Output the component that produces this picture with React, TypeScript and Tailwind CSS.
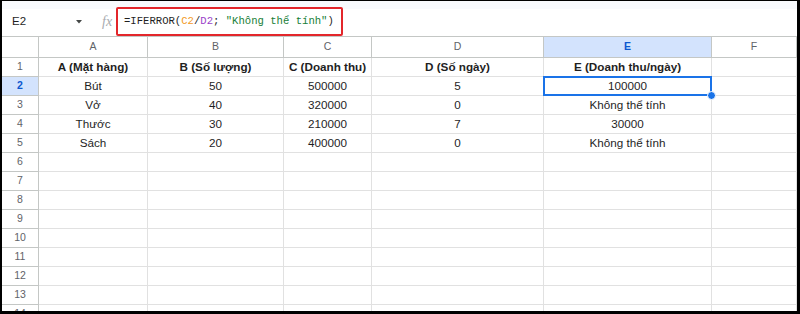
import React from "react";

const COLS = ["A", "B", "C", "D", "E", "F"];

const ROWS: string[][] = [
  ["A (Mặt hàng)", "B (Số lượng)", "C (Doanh thu)", "D (Số ngày)", "E (Doanh thu/ngày)", ""],
  ["Bút", "50", "500000", "5", "100000", ""],
  ["Vở", "40", "320000", "0", "Không thể tính", ""],
  ["Thước", "30", "210000", "7", "30000", ""],
  ["Sách", "20", "400000", "0", "Không thể tính", ""],
];

const TOTAL_ROWS = 14;

function FormulaBar() {
  return (
    <div className="flex h-[36px] items-end border-b border-[#c4c7c5] bg-[linear-gradient(#f8fafd_0_8px,white_8px)]">
      <div className="flex h-[29px] w-[100px] items-center pl-[10px] text-[11.5px] text-[#1f1f1f]">
        <span>E2</span>
        <svg className="ml-auto mr-[20px]" width="6" height="4" viewBox="0 0 6 4">
          <polygon points="0,0 6,0 3,3.5" fill="#444746" />
        </svg>
      </div>
      <div className="flex h-[29px] w-[14px] items-center font-['Liberation_Serif',serif] text-[14px] italic text-[#a8abb0]">
        fx
      </div>
      <div className="flex h-[29px] w-[227px] items-center rounded-[2px] border-2 border-[#e3262b] pl-[6px] font-['Liberation_Mono',monospace] text-[10.6px] text-[#1f1f1f] whitespace-pre">
        <span>=IFERROR(</span>
        <span className="text-[#f29a1f]">C2</span>
        <span>/</span>
        <span className="text-[#9a3fc9]">D2</span>
        <span>; </span>
        <span className="text-[#188038]">"Không thể tính"</span>
        <span>)</span>
      </div>
    </div>
  );
}

export default function App() {
  const body: string[][] = [];
  for (let i = 0; i < TOTAL_ROWS; i++) body.push(ROWS[i] ?? ["", "", "", "", "", ""]);

  return (
    <div className="h-[314px] w-[800px] overflow-hidden border-b-[3px] border-l-2 border-r-[3px] border-t border-black bg-white font-['Liberation_Sans',Arial,sans-serif]">
      <FormulaBar />
      <div className="grid grid-cols-[37px_109px_136px_88px_172px_168px_1fr]">
        {/* column headers */}
        <div className="h-[21px] border-b border-r border-[#c4c7c5]" />
        {COLS.map((c) => (
          <div
            key={c}
            className={`flex h-[21px] items-center justify-center border-b border-r border-[#c4c7c5] text-[10.5px] ${
              c === "E" ? "bg-[#d3e3fd] font-bold text-[#0b57d0]" : "text-[#5f6368]"
            }`}
          >
            {c}
          </div>
        ))}

        {body.map((row, ri) => (
          <React.Fragment key={ri}>
            <div
              className={`flex h-[19px] items-center justify-center border-b border-r border-[#c4c7c5] text-[10.5px] ${
                ri === 1 ? "bg-[#d3e3fd] font-bold text-[#0b57d0]" : "text-[#5f6368]"
              }`}
            >
              {ri + 1}
            </div>
            {row.map((cell, ci) => (
              <div
                key={ci}
                className={`relative flex h-[19px] items-center justify-center border-b border-r border-[#e1e1e1] text-[11.7px] text-[#1f1f1f] ${
                  ri === 0 ? "font-bold" : ""
                }`}
              >
                {cell}
                {ri === 1 && ci === 4 && (
                  <div className="absolute -bottom-px -left-px -right-px -top-px z-10 border-2 border-[#1a73e8]">
                    <div className="absolute -bottom-[6px] -right-[6px] h-[9px] w-[9px] rounded-full border border-white bg-[#1a73e8]" />
                  </div>
                )}
              </div>
            ))}
          </React.Fragment>
        ))}
      </div>
    </div>
  );
}
